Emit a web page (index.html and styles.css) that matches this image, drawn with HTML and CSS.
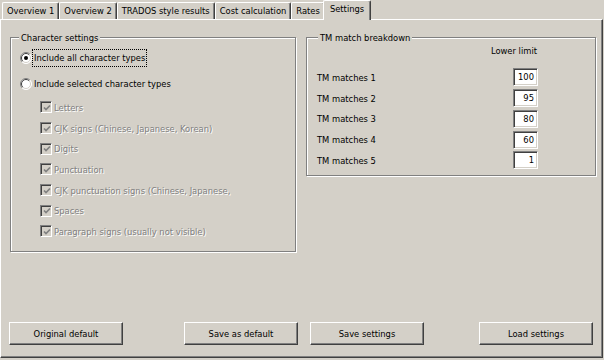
FILE: index.html
```html
<!DOCTYPE html>
<html>
<head>
<meta charset="utf-8">
<link rel="stylesheet" href="styles.css">
</head>
<body>
<div class="window">
  <div class="tabs">
    <div class="tab">Overview 1</div>
    <div class="tab">Overview 2</div>
    <div class="tab">TRADOS style results</div>
    <div class="tab">Cost calculation</div>
    <div class="tab">Rates</div>
    <div class="tab active">Settings</div>
  </div>
  <div class="panel">
    <div class="groups">
      <div class="group char">
        <div class="group-title">Character settings</div>
        <div class="opt opt-first">
          <svg class="radio" width="12" height="12" viewBox="0 0 12 12"><circle cx="6" cy="6" r="5.5" fill="#fff"/><path d="M2.1 9.9 A5.5 5.5 0 0 1 9.9 2.1" stroke="#808080" fill="none"/><path d="M9.9 2.1 A5.5 5.5 0 0 1 2.1 9.9" stroke="#fff" fill="none"/><path d="M2.8 9.2 A4.5 4.5 0 0 1 9.2 2.8" stroke="#404040" fill="none"/><path d="M9.2 2.8 A4.5 4.5 0 0 1 2.8 9.2" stroke="#d4d0c8" fill="none"/><circle cx="6" cy="6" r="2" fill="#000"/></svg>
          <span class="label focus">Include all character types</span>
        </div>
        <div class="opt opt-second">
          <svg class="radio" width="12" height="12" viewBox="0 0 12 12"><circle cx="6" cy="6" r="5.5" fill="#fff"/><path d="M2.1 9.9 A5.5 5.5 0 0 1 9.9 2.1" stroke="#808080" fill="none"/><path d="M9.9 2.1 A5.5 5.5 0 0 1 2.1 9.9" stroke="#fff" fill="none"/><path d="M2.8 9.2 A4.5 4.5 0 0 1 9.2 2.8" stroke="#404040" fill="none"/><path d="M9.2 2.8 A4.5 4.5 0 0 1 2.8 9.2" stroke="#d4d0c8" fill="none"/></svg>
          <span class="label">Include selected character types</span>
        </div>
        <div class="checks">
          <div class="check-row"><span class="cbox"><svg width="8" height="8" viewBox="0 0 8 8"><path d="M1 3.5 L3 5.5 L7 1.5" stroke="#808080" stroke-width="1.7" fill="none"/></svg></span><span class="dis">Letters</span></div>
          <div class="check-row"><span class="cbox"><svg width="8" height="8" viewBox="0 0 8 8"><path d="M1 3.5 L3 5.5 L7 1.5" stroke="#808080" stroke-width="1.7" fill="none"/></svg></span><span class="dis">CJK signs (Chinese, Japanese, Korean)</span></div>
          <div class="check-row"><span class="cbox"><svg width="8" height="8" viewBox="0 0 8 8"><path d="M1 3.5 L3 5.5 L7 1.5" stroke="#808080" stroke-width="1.7" fill="none"/></svg></span><span class="dis">Digits</span></div>
          <div class="check-row"><span class="cbox"><svg width="8" height="8" viewBox="0 0 8 8"><path d="M1 3.5 L3 5.5 L7 1.5" stroke="#808080" stroke-width="1.7" fill="none"/></svg></span><span class="dis">Punctuation</span></div>
          <div class="check-row"><span class="cbox"><svg width="8" height="8" viewBox="0 0 8 8"><path d="M1 3.5 L3 5.5 L7 1.5" stroke="#808080" stroke-width="1.7" fill="none"/></svg></span><span class="dis">CJK punctuation signs (Chinese, Japanese,</span></div>
          <div class="check-row"><span class="cbox"><svg width="8" height="8" viewBox="0 0 8 8"><path d="M1 3.5 L3 5.5 L7 1.5" stroke="#808080" stroke-width="1.7" fill="none"/></svg></span><span class="dis">Spaces</span></div>
          <div class="check-row"><span class="cbox"><svg width="8" height="8" viewBox="0 0 8 8"><path d="M1 3.5 L3 5.5 L7 1.5" stroke="#808080" stroke-width="1.7" fill="none"/></svg></span><span class="dis">Paragraph signs (usually not visible)</span></div>
        </div>
      </div>
      <div class="group tm">
        <div class="group-title">TM match breakdown</div>
        <div class="tm-head">Lower limit</div>
        <div class="tm-rows">
          <div class="tm-row"><span>TM matches 1</span><span class="field">100</span></div>
          <div class="tm-row"><span>TM matches 2</span><span class="field">95</span></div>
          <div class="tm-row"><span>TM matches 3</span><span class="field">80</span></div>
          <div class="tm-row"><span>TM matches 4</span><span class="field">60</span></div>
          <div class="tm-row"><span>TM matches 5</span><span class="field">1</span></div>
        </div>
      </div>
    </div>
    <div class="buttons">
      <button class="btn">Original default</button>
      <button class="btn btn-mid">Save as default</button>
      <button class="btn btn-next">Save settings</button>
      <button class="btn btn-far">Load settings</button>
    </div>
  </div>
</div>
</body>
</html>
```

FILE: styles.css
```css
* { box-sizing: border-box; }
html, body {
  margin: 0;
  padding: 0;
  background: #d4d0c8;
}
body {
  width: 604px;
  height: 360px;
  overflow: hidden;
  font-family: "DejaVu Sans Condensed", "Liberation Sans", sans-serif;
  font-stretch: condensed;
  font-size: 9.3px;
  color: #000;
}
.window {
  width: 604px;
  height: 360px;
}
.tabs {
  display: flex;
  align-items: flex-end;
  height: 19px;
  padding-left: 2px;
}
.tab {
  height: 17px;
  line-height: 16px;
  padding: 0 4px;
  border-top: 1px solid #fff;
  border-left: 1px solid #fff;
  border-right: 1px solid #404040;
  box-shadow: inset -1px 0 0 #808080;
  border-radius: 2px 2px 0 0;
  white-space: nowrap;
}
.tab.active {
  height: 20px;
  line-height: 15px;
  margin: 0 -1px -1px -2px;
  padding: 0 6px 0 6px;
  background: #d4d0c8;
  position: relative;
  z-index: 1;
}
.panel {
  width: 603px;
  height: 339px;
  border-top: 1px solid #fff;
  border-left: 1px solid #fff;
  border-right: 1px solid #404040;
  border-bottom: 1px solid #404040;
  box-shadow: inset -1px -1px 0 #808080;
  display: flex;
  flex-direction: column;
  padding: 0 0 12px 0;
}
.groups {
  display: grid;
  grid-template-columns: 286px 290px;
  column-gap: 10px;
  align-items: start;
  margin: 17px 0 0 9px;
}
.group {
  border: 1px solid #808080;
  box-shadow: inset 1px 1px 0 #fff, 1px 1px 0 #fff;
}
.group-title {
  width: fit-content;
  height: 13px;
  line-height: 13px;
  margin-top: -7px;
  padding: 0 2px;
  background: #d4d0c8;
}
.char .group-title { margin-left: -1px; }
.tm .group-title { margin-left: 1px; }
.char {
  padding: 0 0 9px 9px;
}
.opt {
  display: flex;
  align-items: center;
  height: 18px;
}
.opt-first { margin-top: 5px; }
.opt-second { margin-top: 8px; }
.radio {
  flex: none;
  display: block;
}
.label {
  line-height: 14px;
  padding: 1px 1px;
  border: 1px solid transparent;
  white-space: nowrap;
}
.label.focus {
  border: 1px dotted #000;
}
.checks {
  margin-top: 4px;
  padding-left: 20px;
}
.check-row {
  display: flex;
  align-items: center;
  height: 20.7px;
  white-space: nowrap;
}
.cbox {
  flex: none;
  width: 12px;
  height: 12px;
  margin-right: 2px;
  border-top: 1px solid #808080;
  border-left: 1px solid #808080;
  border-right: 1px solid #fff;
  border-bottom: 1px solid #fff;
  box-shadow: inset 1px 1px 0 #404040;
  background: #d4d0c8;
  display: flex;
  align-items: center;
  justify-content: center;
  padding: 1px 0 0 1px;
}
.cbox svg { display: block; }
.dis {
  color: #808080;
  text-shadow: 1px 1px 0 #fff;
}
.tm {
  padding: 0 57px 4px 10px;
}
.tm-head {
  height: 13px;
  line-height: 13px;
  text-align: right;
  padding-right: 1px;
}
.tm-rows {
  margin-top: 10px;
}
.tm-row {
  display: flex;
  align-items: center;
  justify-content: space-between;
  height: 20.75px;
}
.field {
  width: 25px;
  height: 18px;
  line-height: 16px;
  background: #fff;
  text-align: right;
  padding-right: 3px;
  border-top: 1px solid #808080;
  border-left: 1px solid #808080;
  border-right: 1px solid #fff;
  border-bottom: 1px solid #fff;
  box-shadow: inset 1px 1px 0 #404040, inset -1px -1px 0 #d4d0c8;
}
.buttons {
  display: flex;
  margin-top: auto;
  padding-left: 8px;
}
.btn {
  width: 114px;
  height: 23px;
  padding: 0;
  margin: 0;
  font: inherit;
  font-family: "DejaVu Sans Condensed", "Liberation Sans", sans-serif;
  font-stretch: condensed;
  font-size: 9.3px;
  color: #000;
  background: #d4d0c8;
  border-top: 1px solid #fff;
  border-left: 1px solid #fff;
  border-right: 1px solid #404040;
  border-bottom: 1px solid #404040;
  box-shadow: inset -1px -1px 0 #808080;
  border-radius: 0;
}
.btn-mid { margin-left: 61px; }
.btn-next { margin-left: 12px; }
.btn-far { margin-left: 55px; }
```
